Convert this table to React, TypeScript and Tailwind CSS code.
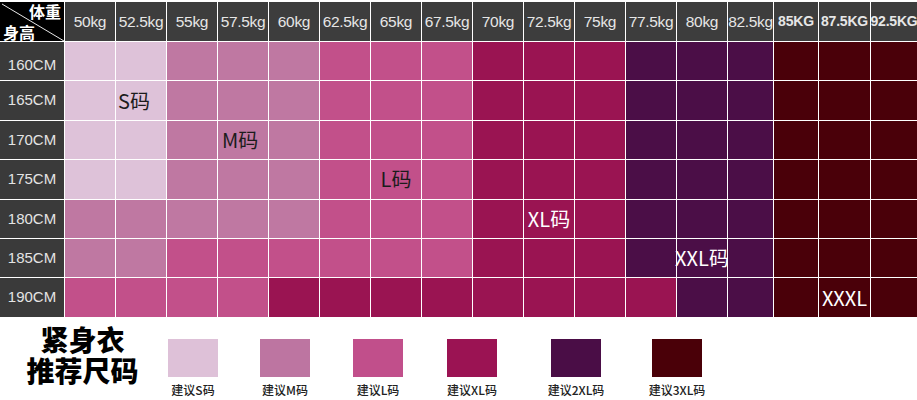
const weights = [
  "50kg", "52.5kg", "55kg", "57.5kg", "60kg", "62.5kg", "65kg", "67.5kg", "70kg",
  "72.5kg", "75kg", "77.5kg", "80kg", "82.5kg", "85KG", "87.5KG", "92.5KG",
];

const heights = ["160CM", "165CM", "170CM", "175CM", "180CM", "185CM", "190CM"];

// S, M, L, X = XL, D = 2XL, T = 3XL
const chart = [
  "SSMMMLLLXXXDDDTTT",
  "SSMMMLLLXXXDDDTTT",
  "SSMMMLLLXXXDDDTTT",
  "SSMMMLLLXXXDDDTTT",
  "MMMMMLLLXXXDDDTTT",
  "MMLLLLLLXXXDDDTTT",
  "LLLLXXXXXXXXDDTTT",
];

const fill: Record<string, string> = {
  S: "bg-[#dec2d9]",
  M: "bg-[#bf78a2]",
  L: "bg-[#c2508a]",
  X: "bg-[#9a1452]",
  D: "bg-[#4b0e47]",
  T: "bg-[#4a0009]",
};

const marks: Record<string, { text: string; cls: string }> = {
  "1-1": { text: "S码", cls: "justify-start pl-[2px] text-[#1c1c1c]" },
  "2-3": { text: "M码", cls: "justify-start pl-[4px] text-[#1c1c1c]" },
  "3-6": { text: "L码", cls: "justify-center text-[#1c1c1c]" },
  "4-9": { text: "XL码", cls: "justify-center text-white" },
  "5-12": { text: "XXL码", cls: "justify-center text-white" },
  "6-15": { text: "XXXL", cls: "justify-center text-white" },
};

const legend = [
  { label: "建议S码", color: "bg-[#dec1d8]", w: "w-[92px]" },
  { label: "建议M码", color: "bg-[#bd75a1]", w: "w-[92px]" },
  { label: "建议L码", color: "bg-[#c14f8b]", w: "w-[94px]" },
  { label: "建议XL码", color: "bg-[#9b1353]", w: "w-[94px]" },
  { label: "建议2XL码", color: "bg-[#4a0d46]", w: "w-[114px]" },
  { label: "建议3XL码", color: "bg-[#4a0008]", w: "w-[88px]" },
];

export default function App() {
  return (
    <div className="w-[917px] h-[400px] bg-white overflow-hidden font-['Liberation_Sans',sans-serif]">
      <div className="pt-[2px] bg-white">
        <div className="grid grid-cols-[64px_repeat(13,50px)_45px_44px_51px_46px] grid-rows-[39px_repeat(7,38.4px)] gap-px bg-white">
          {/* corner */}
          <div className="relative bg-black">
            <svg className="absolute inset-0 w-full h-full" viewBox="0 0 64 39" preserveAspectRatio="none">
              <line x1="2" y1="2" x2="64" y2="39" stroke="#e8e8e8" strokeWidth="1" />
            </svg>
            <span className="absolute right-[3px] top-[1px] text-[16px] leading-none font-bold text-white font-['Noto_Sans_CJK_SC',sans-serif]">
              体重
            </span>
            <span className="absolute left-[3px] bottom-[1px] text-[16px] leading-none font-bold text-white font-['Noto_Sans_CJK_SC',sans-serif]">
              身高
            </span>
          </div>

          {weights.map((w, i) => (
            <div
              key={w}
              className={`bg-[#3d3d3d] flex items-center justify-center text-[#e6e6e6] whitespace-nowrap ${
                i >= 14 ? "font-bold text-[14px] tracking-[-0.2px]" : "text-[15.5px] tracking-[-0.3px]"
              }`}
            >
              {w}
            </div>
          ))}

          {heights.map((h, r) => (
            <>
              <div
                key={h}
                className={`bg-[#3a3a3a] flex items-center justify-center text-[15px] text-[#e4e4e4] ${
                  r === 0 ? "pt-[9px]" : ""
                }`}
              >
                {h}
              </div>
              {chart[r].split("").map((c, col) => {
                const m = marks[`${r}-${col}`];
                return (
                  <div
                    key={`${h}-${col}`}
                    className={`${fill[c]} flex items-center whitespace-nowrap text-[20px] leading-none font-['Noto_Sans_CJK_SC',sans-serif] ${
                      m ? m.cls : ""
                    }`}
                  >
                    {m ? m.text : null}
                  </div>
                );
              })}
            </>
          ))}
        </div>
      </div>

      <div className="flex h-[82px] font-['Noto_Sans_CJK_SC',sans-serif]">
        <div className="w-[147px] pl-[18px] pt-[10px] flex flex-col items-center text-[28px] leading-[30px] font-black text-black font-['Liberation_Sans','Noto_Sans_CJK_SC',sans-serif]">
          <div className="h-[31px]">紧身衣</div>
          <div className="h-[30px]">推荐尺码</div>
        </div>
        {legend.map((l) => (
          <div key={l.label} className={`${l.w} flex flex-col items-center pt-[22px]`}>
            <div className={`${l.color} w-[50px] h-[38px]`} />
            <span className="mt-[7px] text-[12px] leading-none font-medium text-[#222] whitespace-nowrap">
              {l.label}
            </span>
          </div>
        ))}
      </div>
    </div>
  );
}
